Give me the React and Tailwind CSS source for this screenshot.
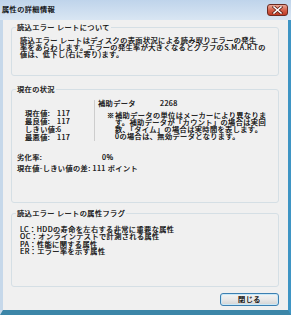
import React from "react";

const CloseButton = () => (
  <div className="mt-[4px] w-[21px] h-[12px] rounded-[3px] border border-[#6b2b22] bg-gradient-to-b from-[#e9a897] via-[#d6624c] to-[#bf3a24] flex items-center justify-center">
    <svg width="11" height="8" viewBox="0 0 11 8">
      <path d="M2 1 L9 7 M9 1 L2 7" stroke="#5a2019" strokeWidth="3" strokeLinecap="square" />
      <path d="M2 1 L9 7 M9 1 L2 7" stroke="#ffffff" strokeWidth="1.6" strokeLinecap="square" />
    </svg>
  </div>
);

const GroupBox = ({ title, className, children }) => (
  <fieldset className={`border border-[#d5dfe5] rounded-[3px] ${className}`}>
    <legend className="ml-[4px] px-[1px] leading-[8px]">{title}</legend>
    {children}
  </fieldset>
);

const stats = [
  ["現在値:", "117"],
  ["最良値:", "117"],
  ["しきい値:", "6"],
  ["最悪値:", "117"],
];

export default function App() {
  return (
    <div className="w-[291px] h-[315px] flex flex-col overflow-hidden text-[7.2px] tracking-[0.4px] leading-[7px] text-black [-webkit-text-stroke:0.2px_#000] [font-family:'Noto_Sans_CJK_JP','Noto_Sans',sans-serif]">
      {/* title bar */}
      <div className="h-[20px] shrink-0 flex items-start justify-between pl-[2px] pr-[3px] bg-gradient-to-b from-[#bfd4eb] to-[#d9e6f3]">
        <span className="mt-[5px] leading-[8px]">属性の詳細情報</span>
        <CloseButton />
      </div>

      {/* client */}
      <div className="flex-1 flex flex-col bg-[#f0f0f0] border-l-[3px] border-r-[3px] border-b-[5px] border-l-[#c6d8ea] border-r-[#3f95c4] border-b-[#3c86a8] pl-[8px] pr-[9px] pt-[3px]">
        <GroupBox title="読込エラー レートについて" className="h-[53px]">
          <div className="mt-[6px] pl-[8px] leading-[6.8px] whitespace-nowrap">
            <div>読込エラー レートはディスクの表面状況による読み取りエラーの発生</div>
            <div>率をあらわします。エラーの発生率が大きくなるとグラフのS.M.A.R.Tの</div>
            <div>値は、低下し(右に寄り)ます。</div>
          </div>
        </GroupBox>

        <GroupBox title="現在の状況" className="mt-[9px] h-[118px]">
          <div className="flex mt-[7px] pl-[13px]">
            <div className="w-[69px] pt-[9px]">
              {stats.map(([k, v]) => (
                <div key={k} className="flex leading-[8px]">
                  <span className="w-[32px] whitespace-nowrap">{k}</span>
                  <span>{v}</span>
                </div>
              ))}
            </div>
            <div className="border-l border-[#cdcdcd] pl-[3px] whitespace-nowrap">
              <div className="flex">
                <span className="w-[62px]">補助データ</span>
                <span>2268</span>
              </div>
              <div className="flex mt-[5px] ml-[9px]">
                <span className="w-[8px]">※</span>
                <div>
                  <div>補助データの単位はメーカーにより異なりま</div>
                  <div>す。補助データが「カウント」の場合は実回</div>
                  <div>数、「タイム」の場合は実時間を表します。</div>
                  <div>0の場合は、無効データとなります。</div>
                </div>
              </div>
            </div>
          </div>
          <div className="flex mt-[13px] pl-[5px]">
            <span className="w-[85px]">劣化率:</span>
            <span>0%</span>
          </div>
          <div className="mt-[4px] pl-[5px] whitespace-nowrap">現在値-しきい値の差: 111 ポイント</div>
        </GroupBox>

        <GroupBox title="読込エラー レートの属性フラグ" className="mt-[6px] h-[78px]">
          <div className="mt-[9px] pl-[8px] leading-[7.4px] whitespace-nowrap">
            <div>LC：HDDの寿命を左右する非常に重要な属性</div>
            <div>OC：オンラインテストで計測される属性</div>
            <div>PA：性能に関する属性</div>
            <div>ER：エラー率を示す属性</div>
          </div>
        </GroupBox>

        <button className="mt-[6px] self-end w-[59px] h-[13px] rounded-[3px] border border-[#3c7fb1] bg-gradient-to-b from-[#f4f4f4] via-[#e8e8e8] to-[#d3d3d3] shadow-[inset_0_0_0_1px_#c8e8f8] leading-[11px] text-center">
          閉じる
        </button>
      </div>
    </div>
  );
}
